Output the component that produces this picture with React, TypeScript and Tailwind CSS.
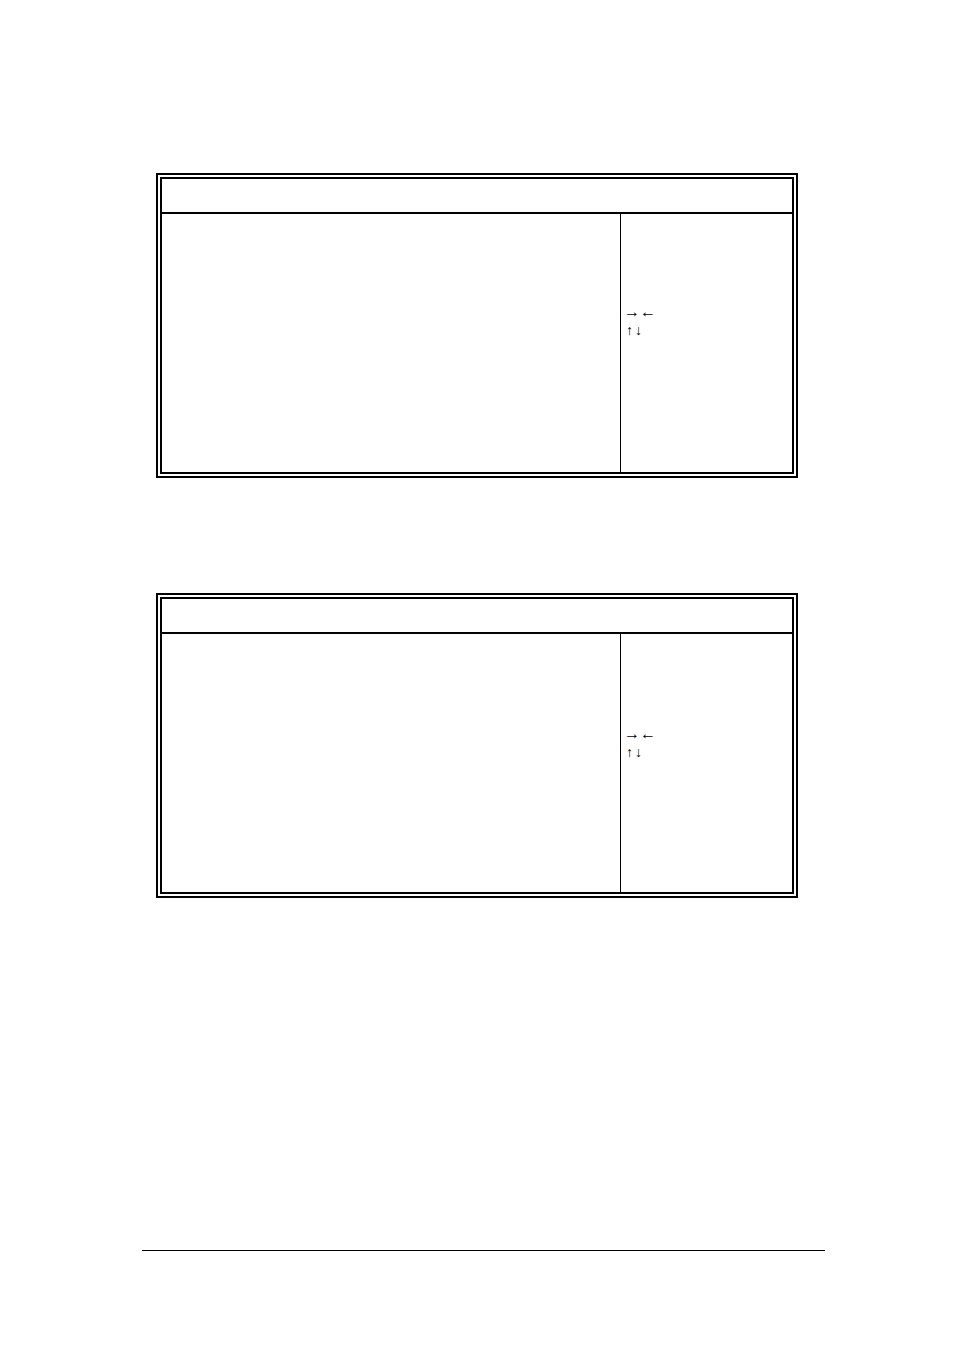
type SetupScreenProps = {
  legendClass: string;
};

function SetupScreen({ legendClass }: SetupScreenProps) {
  return (
    <section className="w-full border-[6px] border-double border-black">
      <header className="h-[35px] border-b-2 border-black" />
      <div className="flex h-[258px]">
        <div className="flex-1" />
        <aside
          className={`w-[27.3%] border-l border-black pl-[3px] font-['Liberation_Serif',serif] text-base leading-[19px] text-black ${legendClass}`}
        >
          <p>→←</p>
          <p className="flex gap-0.5 pl-0.5 text-sm leading-[19px]">
            <span>↑</span>
            <span>↓</span>
          </p>
        </aside>
      </div>
    </section>
  );
}

export default function App() {
  return (
    <div className="flex min-h-screen flex-col bg-white pt-[173px] pr-[129px] pb-[99px] pl-[142px]">
      <main className="flex flex-col gap-[115px] pr-[27px] pl-[14px]">
        <SetupScreen legendClass="pt-[88px]" />
        <SetupScreen legendClass="pt-[90px]" />
      </main>
      <footer className="mt-auto border-t border-black" />
    </div>
  );
}
